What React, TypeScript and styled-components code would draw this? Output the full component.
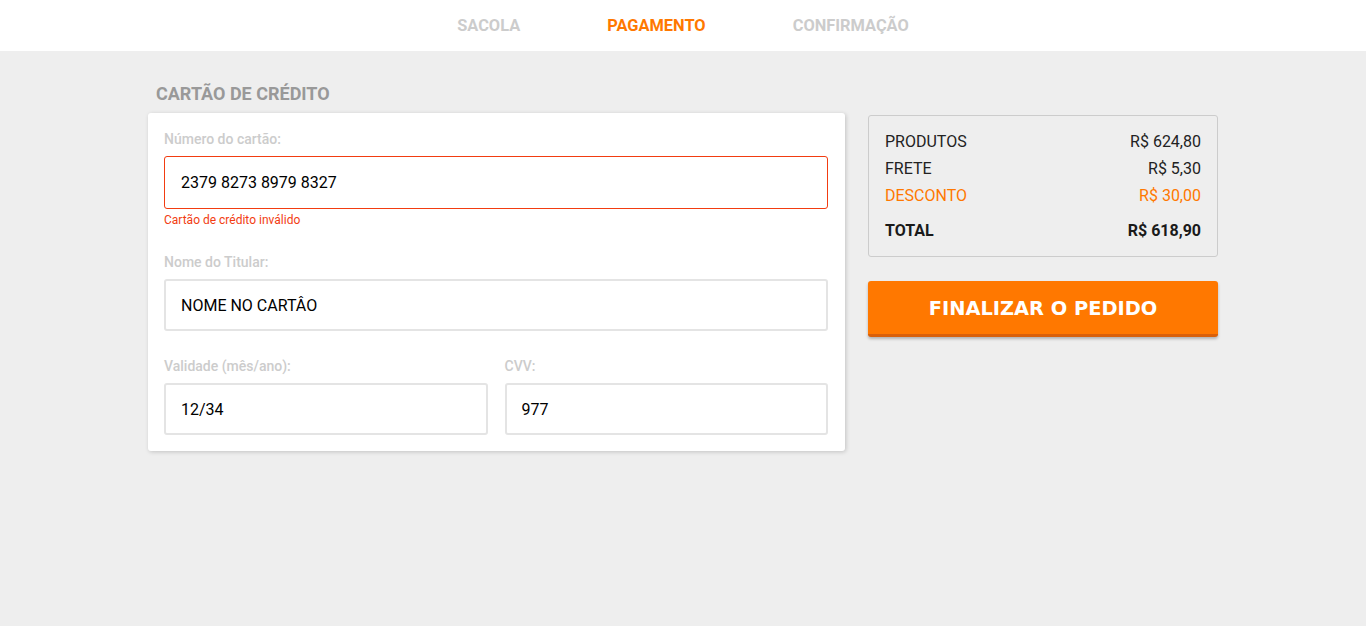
import React from "react";
import styled, { createGlobalStyle } from "styled-components";

const GlobalStyle = createGlobalStyle`
  html, body { margin: 0; padding: 0; }
  body {
    background: #eeeeee;
    font-family: Roboto, "Liberation Sans", Arial, sans-serif;
    min-height: 626px;
  }
  * { box-sizing: border-box; }
`;

const Header = styled.header`
  height: 51px;
  background: #ffffff;
  display: flex;
  justify-content: center;
  align-items: center;
  gap: 87px;
`;

const Step = styled.span<{ $active?: boolean }>`
  font-family: Roboto, sans-serif;
  font-weight: 700;
  font-size: 16.4px;
  color: ${(p) => (p.$active ? "#ff7800" : "#cccccc")};
`;

const Container = styled.main`
  width: 1070px;
  margin: 0 auto;
  display: flex;
  gap: 23px;
  padding-top: 32px;
`;

const LeftColumn = styled.section`
  width: 697px;
  display: flex;
  flex-direction: column;
`;

const SectionTitle = styled.h2`
  margin: 0 0 8px 8px;
  font-size: 18px;
  line-height: 22px;
  font-weight: 700;
  color: #999999;
`;

const Card = styled.div`
  background: #ffffff;
  border-radius: 3px;
  box-shadow: 1px 1px 4px rgba(0, 0, 0, 0.18);
  padding: 17px 17px 16px 16px;
  display: flex;
  flex-direction: column;
`;

const Field = styled.div`
  display: flex;
  flex-direction: column;
  flex: 1;
`;

const FieldRow = styled.div`
  display: flex;
  gap: 17px;
`;

const Label = styled.label`
  font-size: 14px;
  line-height: 18px;
  font-weight: 500;
  color: #cccccc;
  margin-bottom: 8px;
`;

const Input = styled.div<{ $error?: boolean }>`
  height: ${(p) => (p.$error ? "53px" : "52px")};
  border: ${(p) => (p.$error ? "1px solid #f23c11" : "2px solid #e4e4e4")};
  border-radius: 3px;
  display: flex;
  align-items: center;
  padding-left: ${(p) => (p.$error ? "16px" : "15px")};
  font-size: 16px;
  color: #000000;
`;

const ErrorText = styled.span`
  font-size: 12px;
  line-height: 14px;
  color: #f23c11;
  margin-top: 4px;
`;

const Spacer = styled.div<{ $h: number }>`
  height: ${(p) => p.$h}px;
`;

const RightColumn = styled.aside`
  width: 350px;
  padding-top: 32px;
  display: flex;
  flex-direction: column;
  gap: 24px;
`;

const Summary = styled.div`
  border: 1px solid #cccccc;
  border-radius: 3px;
  padding: 12px 16px 12px 16px;
  display: flex;
  flex-direction: column;
`;

const SummaryRow = styled.div<{ $tone?: "normal" | "discount" | "total" }>`
  display: flex;
  justify-content: space-between;
  font-size: 16px;
  line-height: 27px;
  font-weight: ${(p) => (p.$tone === "total" ? 700 : 400)};
  color: ${(p) =>
    p.$tone === "discount" ? "#ff7800" : p.$tone === "total" ? "#1a1a1a" : "#222222"};
  margin-top: ${(p) => (p.$tone === "total" ? "8px" : "0")};
`;

const FinishButton = styled.button`
  height: 56px;
  width: 100%;
  background: #ff7800;
  border: none;
  border-bottom: 3px solid #d9600a;
  border-radius: 3px;
  box-shadow: 0 2px 3px rgba(0, 0, 0, 0.25);
  color: #ffffff;
  font-family: "DejaVu Sans", Verdana, sans-serif;
  font-weight: 700;
  font-size: 19.4px;
  padding: 2px 0 0 0;
  cursor: pointer;
`;

export default function App() {
  return (
    <>
      <GlobalStyle />
      <Header>
        <Step>SACOLA</Step>
        <Step $active>PAGAMENTO</Step>
        <Step>CONFIRMAÇÃO</Step>
      </Header>
      <Container>
        <LeftColumn>
          <SectionTitle>CARTÃO DE CRÉDITO</SectionTitle>
          <Card>
            <Field>
              <Label>Número do cartão:</Label>
              <Input $error>2379 8273 8979 8327</Input>
              <ErrorText>Cartão de crédito inválido</ErrorText>
            </Field>
            <Spacer $h={26} />
            <Field>
              <Label>Nome do Titular:</Label>
              <Input>NOME NO CARTÂO</Input>
            </Field>
            <Spacer $h={26} />
            <FieldRow>
              <Field>
                <Label>Validade (mês/ano):</Label>
                <Input>12/34</Input>
              </Field>
              <Field>
                <Label>CVV:</Label>
                <Input>977</Input>
              </Field>
            </FieldRow>
          </Card>
        </LeftColumn>
        <RightColumn>
          <Summary>
            <SummaryRow>
              <span>PRODUTOS</span>
              <span>R$ 624,80</span>
            </SummaryRow>
            <SummaryRow>
              <span>FRETE</span>
              <span>R$ 5,30</span>
            </SummaryRow>
            <SummaryRow $tone="discount">
              <span>DESCONTO</span>
              <span>R$ 30,00</span>
            </SummaryRow>
            <SummaryRow $tone="total">
              <span>TOTAL</span>
              <span>R$ 618,90</span>
            </SummaryRow>
          </Summary>
          <FinishButton>FINALIZAR O PEDIDO</FinishButton>
        </RightColumn>
      </Container>
    </>
  );
}
